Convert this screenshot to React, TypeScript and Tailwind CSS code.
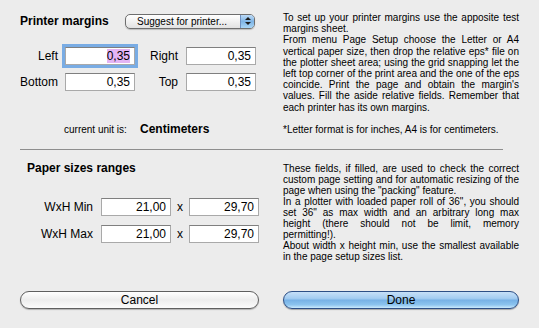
import React from 'react'

const FONT = { fontFamily: '"Liberation Sans", Arial, sans-serif' }

const marginsText: [string, boolean][] = [
  ['To set up your printer margins use the apposite test', true],
  ['margins sheet.', false],
  ['From menu Page Setup choose the Letter or A4', true],
  ['vertical paper size, then drop the relative eps* file on', true],
  ['the plotter sheet area; using the grid snapping let the', true],
  ['left top corner of the print area and the one of the eps', true],
  ["coincide. Print the page and obtain the margin's", true],
  ['values. Fill the aside relative fields. Remember that', true],
  ['each printer has its own margins.', false],
  ['\u00a0', false],
  ['*Letter format is for inches, A4 is for centimeters.', false],
]

const sizesText: [string, boolean][] = [
  ['These fields, if filled, are used to check the correct', true],
  ['custom page setting and for automatic resizing of the', true],
  ['page when using the "packing" feature.', false],
  ['In a plotter with loaded paper roll of 36", you should', true],
  ['set 36" as max width and an arbitrary long max', true],
  ['height (there should not be limit, memory', true],
  ['permitting!).', false],
  ['About width x height min, use the smallest available', true],
  ['in the page setup sizes list.', false],
]

function TextBlock({ lines, leading }: { lines: [string, boolean][]; leading: string }) {
  return (
    <div className={`w-[236px] text-[10px] text-black ${leading}`}>
      {lines.map(([t, j], i) => (
        <div
          key={i}
          className={j ? 'whitespace-nowrap text-justify [text-align-last:justify]' : 'whitespace-nowrap'}
        >
          {t}
        </div>
      ))}
    </div>
  )
}

function Field({ value, focused = false }: { value: string; focused?: boolean }) {
  return (
    <div
      className={`flex h-[18px] w-[70px] items-center justify-end bg-white pr-[4px] text-[12px] text-black border border-[#a9a9a9] border-t-[#7f7f7f] ${
        focused ? 'ring-[3px] ring-[#79ace4] border-[#5b8fd0]' : ''
      }`}
    >
      {focused ? <span className="bg-[#e4b4f4] leading-[14px]">{value}</span> : value}
    </div>
  )
}

function Popup() {
  return (
    <div className="flex h-[15px] w-[130px] items-stretch overflow-hidden rounded-[5px] border border-[#6e6e6e] bg-gradient-to-b from-[#ffffff] via-[#f1f1f1] to-[#e2e2e2] shadow-[0_1px_1px_rgba(0,0,0,0.2)]">
      <div className="flex flex-1 items-center pl-[11px] text-[10px] text-black">Suggest for printer...</div>
      <div className="flex w-[14px] flex-col items-center justify-center gap-[2px] border-l border-[#6e8fbf] bg-gradient-to-b from-[#bcdaf6] via-[#7fb5e6] to-[#a9d6f6]">
        <svg width="6" height="3" viewBox="0 0 6 3">
          <path d="M0 3 L3 0 L6 3 Z" fill="#1c1c1c" />
        </svg>
        <svg width="6" height="3" viewBox="0 0 6 3">
          <path d="M0 0 L3 3 L6 0 Z" fill="#1c1c1c" />
        </svg>
      </div>
    </div>
  )
}

export default function App() {
  return (
    <div className="h-[328px] w-[539px] overflow-hidden bg-[#ececec] text-black" style={FONT}>
      {/* Printer margins */}
      <div className="flex h-[149px] pl-[20px]">
        <div className="w-[239px] pt-[14px]">
          <div className="flex h-[14px] items-center">
            <div className="w-[105px] text-[12px] font-bold">Printer margins</div>
            <Popup />
          </div>
          <div className="mt-[19px] flex flex-col gap-[8px] text-[12px]">
            <div className="flex items-center">
              <div className="w-[38px] text-right">Left</div>
              <div className="ml-[7px]">
                <Field value="0,35" focused />
              </div>
              <div className="w-[43px] text-right">Right</div>
              <div className="ml-[8px]">
                <Field value="0,35" />
              </div>
            </div>
            <div className="flex items-center">
              <div className="w-[38px] text-right">Bottom</div>
              <div className="ml-[7px]">
                <Field value="0,35" />
              </div>
              <div className="w-[43px] text-right">Top</div>
              <div className="ml-[8px]">
                <Field value="0,35" />
              </div>
            </div>
          </div>
          <div className="mt-[31px] flex h-[14px] items-center pl-[44px]">
            <div className="w-[76px] text-[10px]">current unit is:</div>
            <div className="text-[12px] font-bold">Centimeters</div>
          </div>
        </div>
        <div className="ml-[24px] pt-[12px]">
          <TextBlock lines={marginsText} leading="leading-[11.2px]" />
        </div>
      </div>

      <div className="ml-[20px] h-px w-[483px] bg-[#8e8e8e]" />

      {/* Paper sizes ranges */}
      <div className="flex h-[141px] pl-[20px]">
        <div className="w-[239px] pt-[11px]">
          <div className="flex h-[14px] items-center pl-[7px] text-[12px] font-bold">Paper sizes ranges</div>
          <div className="mt-[23px] flex flex-col gap-[9px] text-[12px]">
            {['WxH Min', 'WxH Max'].map(label => (
              <div key={label} className="flex items-center">
                <div className="w-[73px] text-right">{label}</div>
                <div className="ml-[8px]">
                  <Field value="21,00" />
                </div>
                <div className="w-[18px] text-center">x</div>
                <Field value="29,70" />
              </div>
            ))}
          </div>
        </div>
        <div className="ml-[24px] pt-[13px]">
          <TextBlock lines={sizesText} leading="leading-[11px]" />
        </div>
      </div>

      {/* Buttons */}
      <div className="flex gap-[24px] pl-[20px]">
        <button className="flex h-[18px] w-[239px] items-center justify-center rounded-full border border-[#5f5f5f] bg-gradient-to-b from-[#ffffff] via-[#ededed] to-[#fbfbfb] text-[12px] text-black shadow-[0_1px_1px_rgba(0,0,0,0.25)]">
          Cancel
        </button>
        <button className="flex h-[18px] w-[236px] items-center justify-center rounded-full border border-[#2d4f86] bg-[linear-gradient(to_bottom,#c6e0f8_0%,#a3ccf1_40%,#78b2e6_52%,#8cc4ef_80%,#cbeafd_100%)] text-[12px] text-black shadow-[0_1px_1px_rgba(0,0,0,0.3)]">
          Done
        </button>
      </div>
    </div>
  )
}
